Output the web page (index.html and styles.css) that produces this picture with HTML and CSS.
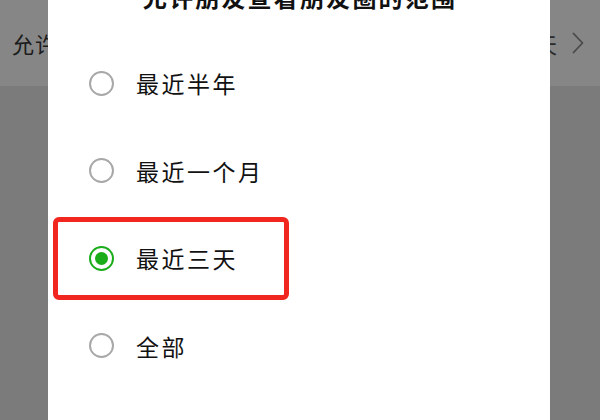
FILE: index.html
```html
<!DOCTYPE html>
<html lang="zh-CN">
<head>
<meta charset="utf-8">
<title>允许朋友查看朋友圈的范围</title>
<link rel="stylesheet" href="styles.css">
</head>
<body>
  <div class="screen">
    <div class="setting-row">
      <span class="setting-label">允许朋友查看朋友圈的范围</span>
      <span class="setting-value">最近三天</span>
      <svg class="chevron" width="12" height="22" viewBox="0 0 12 22" aria-hidden="true">
        <polyline points="1.5,1.5 10.5,11 1.5,20.5" fill="none" stroke="#4a4a4a" stroke-width="1.8" stroke-linecap="round" stroke-linejoin="round"/>
      </svg>
    </div>
  </div>

  <div class="dialog">
    <h2 class="dialog-title">允许朋友查看朋友圈的范围</h2>
    <ul class="options">
      <li class="option"><span class="radio"></span><span class="option-label">最近半年</span></li>
      <li class="option"><span class="radio"></span><span class="option-label">最近一个月</span></li>
      <li class="option is-checked is-highlighted"><span class="radio"></span><span class="option-label">最近三天</span></li>
      <li class="option"><span class="radio"></span><span class="option-label">全部</span></li>
    </ul>
  </div>
</body>
</html>
```

FILE: styles.css
```css
html, body {
  margin: 0;
  padding: 0;
}

body {
  position: relative;
  width: 600px;
  height: 420px;
  overflow: hidden;
  background: #7b7b7b;
  font-family: "Noto Sans CJK SC", "Noto Sans", sans-serif;
  color: #1a1a1a;
}

.screen {
  display: flex;
  flex-direction: column;
}

.setting-row {
  height: 86px;
  background: #868686;
  display: flex;
  align-items: center;
  padding: 0 16px 0 12px;
  box-sizing: border-box;
}

.setting-label {
  flex: 1;
  font-size: 22px;
  line-height: 26px;
  color: #1c1c1c;
  letter-spacing: 1px;
}

.setting-value {
  font-size: 22px;
  line-height: 26px;
  color: #2a2a2a;
  margin-right: 15px;
}

.chevron {
  display: block;
  flex: none;
}

.dialog {
  position: absolute;
  left: 48px;
  top: -16px;
  width: 502px;
  bottom: 0;
  background: #ffffff;
}

.dialog-title {
  margin: 0;
  font-size: 24px;
  line-height: 25px;
  font-weight: 700;
  text-align: center;
  letter-spacing: 2.2px;
  padding-left: 2px;
  color: #111111;
}

.options {
  list-style: none;
  margin: 30.25px 0 0;
  padding: 0;
}

.option {
  position: relative;
  height: 87.5px;
  display: flex;
  align-items: center;
  gap: 22.5px;
  padding-left: 40.5px;
}

.radio {
  flex: none;
  width: 25px;
  height: 25px;
  box-sizing: border-box;
  border: 2px solid #a8a8a8;
  border-radius: 50%;
  display: grid;
  place-items: center;
}

.option.is-checked .radio {
  border-color: #1aad19;
}

.option.is-checked .radio::after {
  content: "";
  width: 13px;
  height: 13px;
  border-radius: 50%;
  background: #1aad19;
}

.option-label {
  font-size: 23px;
  line-height: 26px;
  letter-spacing: 2.5px;
  color: #111111;
}

.option.is-highlighted::after {
  content: "";
  position: absolute;
  left: 5px;
  top: 2.25px;
  width: 236px;
  height: 83px;
  box-sizing: border-box;
  border: 5px solid #f0261f;
  border-radius: 6px;
}
```
